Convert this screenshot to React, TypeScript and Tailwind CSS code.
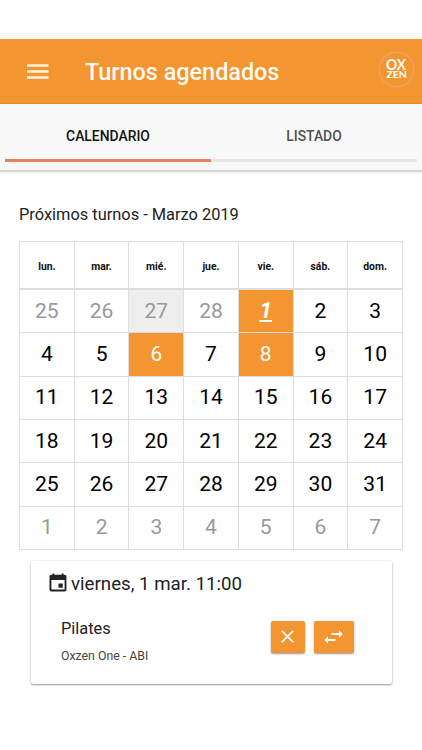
import React from "react";

type Day = { n: number; kind?: "muted" | "hover" | "today" | "booked" };

const weekdays = ["lun.", "mar.", "mié.", "jue.", "vie.", "sáb.", "dom."];

const days: Day[] = [
  { n: 25, kind: "muted" },
  { n: 26, kind: "muted" },
  { n: 27, kind: "hover" },
  { n: 28, kind: "muted" },
  ...Array.from({ length: 31 }, (_, i): Day => ({
    n: i + 1,
    kind: i === 0 ? "today" : i === 5 || i === 7 ? "booked" : undefined,
  })),
  ...Array.from({ length: 7 }, (_, i): Day => ({ n: i + 1, kind: "muted" })),
];

const dayStyles = {
  muted: "text-[21px] text-[#999]",
  hover: "bg-[#eee] text-[21px] text-[#999]",
  booked: "bg-[#f39530] text-[21px] text-white",
  today: "bg-[#f39530] pb-px text-[22.5px] text-white font-bold italic underline decoration-2 underline-offset-2",
  plain: "text-[21px] text-black",
};

function Header() {
  return (
    <header className="flex h-[65px] items-center bg-[#f39530] pr-[7px] pl-[27px]">
      <button aria-label="Menú" className="text-[#fff2df]">
        <svg className="h-[15px] w-[22px]" viewBox="0 0 22 15" fill="currentColor">
          <path d="M0 0.2h21.5v2.5H0zM0 6.3h21.5v2.5H0zM0 12.3h21.5v2.5H0z" />
        </svg>
      </button>
      <h1 className="mt-[2px] ml-[36px] flex-1 text-[23.4px] leading-none font-medium text-[#fffaf0]">Turnos agendados</h1>
      <svg className="mb-1 size-[37px]" viewBox="0 0 37 37">
        <circle cx="18.5" cy="18.5" r="17.3" fill="none" stroke="#eba36a" strokeWidth="1.3" />
        <g fill="#fffaf0" fontFamily="Lato, sans-serif" fontWeight="700">
          <text x="8" y="19" fontSize="15.5" textLength="20" lengthAdjust="spacingAndGlyphs">OX</text>
          <text x="8.4" y="26.6" fontSize="9.5" fontWeight="900" textLength="20.5" lengthAdjust="spacingAndGlyphs">ZEN</text>
        </g>
      </svg>
    </header>
  );
}

function Tabs() {
  return (
    <nav className="flex h-[66px] bg-[#f8f8f8] px-[5px] text-[13.9px] font-medium shadow-[0_1px_2px_1px_rgba(0,0,0,0.2)]">
      <button className="h-[58px] flex-1 border-b-[3px] border-[#e58458] pt-[9px] text-[#111]">CALENDARIO</button>
      <button className="h-[58px] flex-1 border-b-[3px] border-[#e6e6e6] pt-[9px] text-[#505050]">LISTADO</button>
    </nav>
  );
}

function Calendar() {
  return (
    <div className="mx-[19px] w-[384px] border-t border-l border-[#ddd]">
      <div className="grid h-[48px] grid-cols-7">
        {weekdays.map((d) => (
          <div
            key={d}
            className="flex items-center justify-center border-r border-b-2 border-[#ddd] pt-[3px] text-[10.4px] font-bold text-[#111]"
          >
            {d}
          </div>
        ))}
      </div>
      <div className="grid h-[260px] grid-cols-7 grid-rows-6">
        {days.map((d, i) => (
          <div
            key={i}
            className={
              "flex items-center justify-center border-r border-b border-[#ddd] leading-none " +
              dayStyles[d.kind ?? "plain"]
            }
          >
            {d.n}
          </div>
        ))}
      </div>
    </div>
  );
}

function Appointment() {
  return (
    <section className="mt-[11px] ml-[31px] flex h-[123px] w-[360.5px] flex-col rounded-[2px] bg-white pt-[11px] shadow-[0_1px_2px_rgba(0,0,0,0.38),0_0_2px_rgba(0,0,0,0.12)]">
      <h2 className="flex h-6 items-center pl-[16px] text-[18.7px] leading-6 text-[#222]">
        <svg className="mr-[2px] mb-[3px] size-[22px]" viewBox="0 0 24 24" fill="currentColor">
          <path d="M17.2 12.5h-4.7v4.7h4.7zM16 1.7V3H8V1.7H6V3H5c-1.4 0-2.3.9-2.3 2v14c0 1.1.9 2.2 2.3 2.2h14c1.3 0 2.2-1.1 2.2-2.2V5c0-1.1-.9-2-2.2-2h-1V1.7zM19.2 19.2H4.8V8.8h14.4z" />
        </svg>
        viernes, 1 mar. 11:00
      </h2>
      <div className="mt-[21px] flex pl-[30px]">
        <div className="w-[210px]">
          <h3 className="text-[16.4px] leading-6 text-[#222]">Pilates</h3>
          <p className="mt-[7px] text-[12.3px] leading-4 text-[#444]">Oxzen One - ABI</p>
        </div>
        <button
          aria-label="Cancelar"
          className="mt-[4px] flex h-[32px] w-[33.5px] items-center justify-center rounded-[2px] bg-[#f39530] text-white shadow-[0_1px_2px_rgba(0,0,0,0.4)]"
        >
          <svg className="mb-[1px] size-[13px]" viewBox="0 0 13 13" stroke="currentColor" strokeWidth="1.7">
            <path d="M0.8 0.8l11.4 11.4M12.2 0.8L0.8 12.2" />
          </svg>
        </button>
        <button
          aria-label="Cambiar turno"
          className="mt-[4px] ml-[9px] flex h-[32px] w-[40px] items-center justify-center rounded-[2px] bg-[#f39530] text-white shadow-[0_1px_2px_rgba(0,0,0,0.4)]"
        >
          <svg className="mb-[1px] h-[14px] w-[19px]" viewBox="0 0 19 14" fill="currentColor">
            <path d="M15 0.3L18.7 4 15 7.7V5H7.5V3H15zM4 6.3L0.3 10 4 13.7V11h7.5V9H4z" />
          </svg>
        </button>
      </div>
    </section>
  );
}

export default function App() {
  return (
    <main className="h-[750px] w-[422px] overflow-hidden bg-white pt-[39px] font-['Roboto',sans-serif]">
      <Header />
      <Tabs />
      <h2 className="mt-[33px] mb-[14px] ml-[19px] h-6 text-[16.4px] leading-6 text-[#222]">
        Próximos turnos - Marzo 2019
      </h2>
      <Calendar />
      <Appointment />
    </main>
  );
}
